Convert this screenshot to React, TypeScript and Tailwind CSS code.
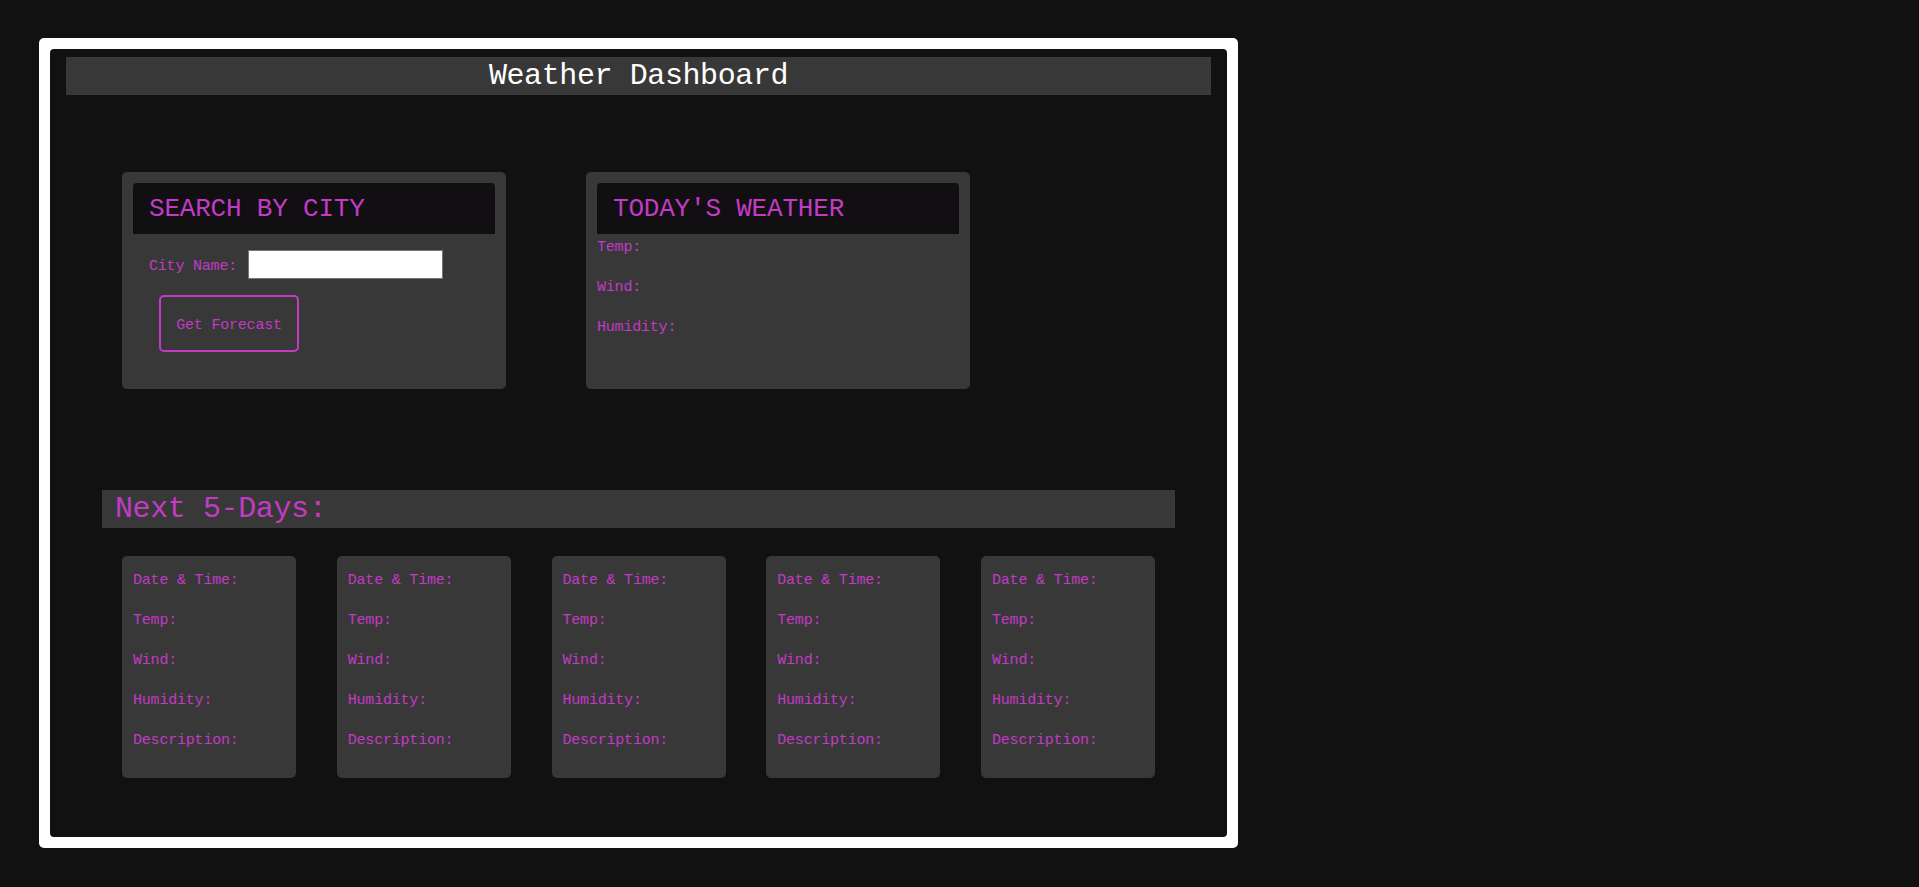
import React from "react";

const mono = { fontFamily: '"Liberation Mono", "DejaVu Sans Mono", monospace' };

function Line({ children }: { children: React.ReactNode }) {
  return <p className="h-[40px] leading-[20px] text-[15px] tracking-[-0.2px] text-[#c23bc5]">{children}</p>;
}

export default function App() {
  const days = [0, 1, 2, 3, 4];
  return (
    <div className="min-h-screen w-full bg-[#121112] pt-[38px] pl-[39px]" style={mono}>
      <div className="w-[1199px] h-[810px] bg-white p-[11px] rounded-[5px]">
        <div className="w-full h-full bg-[#121112] rounded-[4px] flex flex-col">
          <div className="mx-[16px] mt-[8px] h-[38px] bg-[#383838] flex items-center justify-center">
            <h1 className="text-white text-[30px] tracking-[-0.4px] leading-none">Weather Dashboard</h1>
          </div>

          <div className="mt-[77px] ml-[72px] flex gap-[80px]">
            <div className="w-[384px] h-[217px] rounded-[5px] bg-[#383838] p-[11px]">
              <div className="h-[51px] bg-[#110f11] rounded-t-[4px] px-[16px] flex items-center">
                <h2 className="text-[26px] tracking-[-0.2px] text-[#c23bc5] leading-none">SEARCH BY CITY</h2>
              </div>
              <div className="mt-[16px] ml-[16px] flex items-center gap-[11px]">
                <label className="text-[15px] tracking-[-0.2px] text-[#c23bc5] translate-y-[2.5px]">City Name:</label>
                <input className="w-[195px] h-[29px] bg-white border border-[#767676] outline-none" />
              </div>
              <button className="mt-[16px] ml-[26px] w-[140px] h-[57px] pt-[6px] border-2 border-[#c23bc5] rounded-[5px] text-[15px] tracking-[-0.2px] text-[#c23bc5] bg-transparent">
                Get Forecast
              </button>
            </div>

            <div className="w-[384px] h-[217px] rounded-[5px] bg-[#383838] p-[11px]">
              <div className="h-[51px] bg-[#110f11] rounded-t-[4px] px-[16px] flex items-center">
                <h2 className="text-[26px] tracking-[-0.2px] text-[#c23bc5] leading-none">TODAY'S WEATHER</h2>
              </div>
              <div className="mt-[4px]">
                <Line>Temp:</Line>
                <Line>Wind:</Line>
                <Line>Humidity:</Line>
              </div>
            </div>
          </div>

          <div className="mt-[101px] mx-[52px] h-[38px] bg-[#383838] flex items-center pl-[13px]">
            <h2 className="text-[30px] tracking-[-0.4px] text-[#c23bc5] leading-none">Next 5-Days:</h2>
          </div>

          <div className="mt-[28px] ml-[72px] flex gap-[40.75px]">
            {days.map((d) => (
              <div key={d} className="w-[174px] h-[222px] rounded-[5px] bg-[#383838] pt-[14.5px] px-[11px]">
                <Line>Date &amp; Time:</Line>
                <Line>Temp:</Line>
                <Line>Wind:</Line>
                <Line>Humidity:</Line>
                <Line>Description:</Line>
              </div>
            ))}
          </div>
        </div>
      </div>
    </div>
  );
}
